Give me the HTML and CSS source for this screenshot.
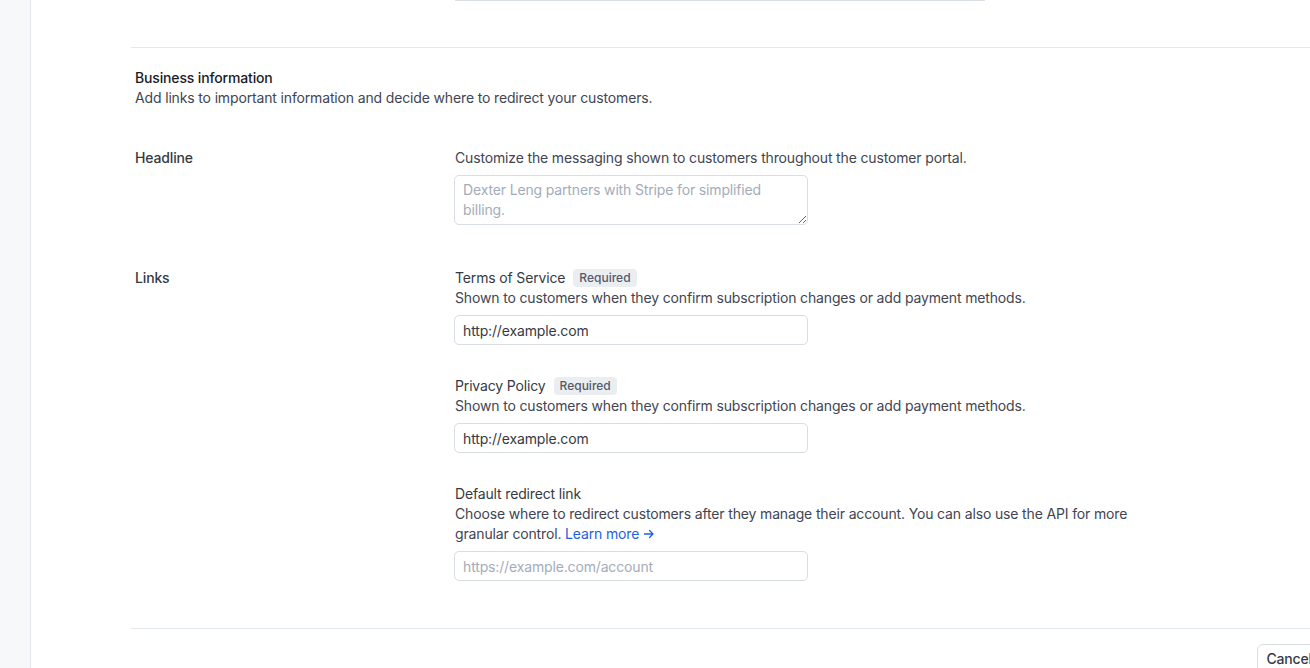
FILE: index.html
```html
<!DOCTYPE html>
<html lang="en">
<head>
<meta charset="utf-8">
<title>Customer portal settings</title>
<link rel="stylesheet" href="styles.css">
</head>
<body>
<div class="app">
  <aside class="sidebar"></aside>
  <main class="main">
    <div class="prev-field-wrap"><div class="prev-field"></div></div>
    <hr class="divider divider-top">
    <section class="section">
      <div class="section-head">
        <h2 class="section-title">Business information</h2>
        <p class="section-desc">Add links to important information and decide where to redirect your customers.</p>
      </div>

      <div class="row row-headline">
        <div class="row-label">Headline</div>
        <div class="row-body">
          <p class="desc">Customize the messaging shown to customers throughout the customer portal.</p>
          <textarea class="textarea" placeholder="Dexter Leng partners with Stripe for simplified billing."></textarea>
        </div>
      </div>

      <div class="row row-links">
        <div class="row-label">Links</div>
        <div class="row-body">
          <div class="field">
            <div class="field-label">Terms of Service <span class="badge">Required</span></div>
            <p class="desc">Shown to customers when they confirm subscription changes or add payment methods.</p>
            <input class="input" type="text" value="http://example.com">
          </div>
          <div class="field">
            <div class="field-label">Privacy Policy <span class="badge">Required</span></div>
            <p class="desc">Shown to customers when they confirm subscription changes or add payment methods.</p>
            <input class="input" type="text" value="http://example.com">
          </div>
          <div class="field">
            <div class="field-label">Default redirect link</div>
            <p class="desc">Choose where to redirect customers after they manage their account. You can also use the API for more granular control. <a class="link" href="#">Learn more<svg class="arrow" width="12" height="12" viewBox="0 0 12 12" aria-hidden="true"><path d="M1.5 6h8.5M6.5 2.5L10 6l-3.5 3.5" fill="none" stroke="currentColor" stroke-width="1.3" stroke-linecap="round" stroke-linejoin="round"/></svg></a></p>
            <input class="input" type="text" placeholder="https://example.com/account">
          </div>
        </div>
      </div>
    </section>
    <hr class="divider divider-bottom">
    <div class="footer">
      <button class="btn" type="button">Cancel</button>
      <button class="btn btn-primary" type="button">Save</button>
    </div>
  </main>
</div>
</body>
</html>
```
FILE: styles.css
```css
* { box-sizing: border-box; }
html, body { margin: 0; padding: 0; }
body {
  font-family: Inter, "Noto Sans", sans-serif;
  font-size: 14px;
  line-height: 20px;
  letter-spacing: -0.15px;
  color: #353a44;
  background: #fff;
  overflow: hidden;
  width: 1310px;
  height: 668px;
}
.app { display: flex; min-height: 668px; }
.sidebar {
  flex: 0 0 31px;
  background: #f6f8fa;
  border-right: 1px solid #e3e8ee;
}
.main {
  flex: 0 0 auto;
  width: 1258px;
  margin-left: 100px;
}
.prev-field-wrap { height: 47px; padding-left: 324px; }
.prev-field {
  width: 530px;
  height: 1px;
  border-bottom: 1px solid #d8dde4;
  border-radius: 0 0 4px 4px;
}
.divider {
  margin: 0;
  border: 0;
  border-top: 1px solid #e3e8ee;
  height: 0;
}
.section { padding: 20px 0 0 4px; }
.section-title {
  margin: 0;
  font-size: 14px;
  font-weight: 500;
  line-height: 20px;
  color: #1a1b25;
}
.section-desc { margin: 0; color: #414552; }
.row { display: grid; grid-template-columns: 320px 1fr; }
.row-headline { margin-top: 40px; }
.row-links { margin-top: 43px; }
.row-label { font-weight: 500; color: #353a44; }
.row-body { max-width: 680px; }
.desc { margin: 0; color: #414552; }
.field-label {
  display: flex;
  align-items: center;
  gap: 8px;
  font-weight: 400;
  color: #353a44;
  height: 20px;
}
.field + .field { margin-top: 31px; }
.badge {
  display: inline-flex;
  align-items: center;
  height: 18px;
  padding: 0 6px;
  border-radius: 4px;
  background: #ebeef1;
  color: #545969;
  font-size: 12px;
  font-weight: 500;
  line-height: 16px;
  letter-spacing: 0;
}
.textarea, .input {
  display: block;
  margin: 7px 0 0 -1px;
  width: 354px;
  font-family: inherit;
  font-size: 14px;
  line-height: 20px;
  letter-spacing: -0.15px;
  color: #353a44;
  border: 1px solid #d8dde4;
  border-radius: 5px;
  background: #fff;
  outline: none;
}
.textarea {
  height: 50px;
  padding: 4px 8px;
  resize: vertical;
}
.input {
  height: 30px;
  padding: 4px 8px;
}
.textarea::placeholder, .input::placeholder { color: #a3acba; opacity: 1; }
.link {
  color: #1d5fe0;
  text-decoration: none;
  font-weight: 400;
  white-space: nowrap;
}
.arrow { vertical-align: -1px; margin-left: 4px; }
.divider-bottom { margin-top: 47px; }
.footer {
  display: flex;
  justify-content: flex-end;
  gap: 8px;
  padding-top: 15px;
}
.btn {
  font-family: inherit;
  font-size: 14px;
  font-weight: 500;
  line-height: 20px;
  letter-spacing: -0.15px;
  height: 30px;
  padding: 4px 8px;
  border: 1px solid #d8dde4;
  border-radius: 6px;
  background: #fff;
  color: #353a44;
}
.btn-primary {
  background: #635bff;
  border-color: #635bff;
  color: #fff;
  width: 60px;
}
```
